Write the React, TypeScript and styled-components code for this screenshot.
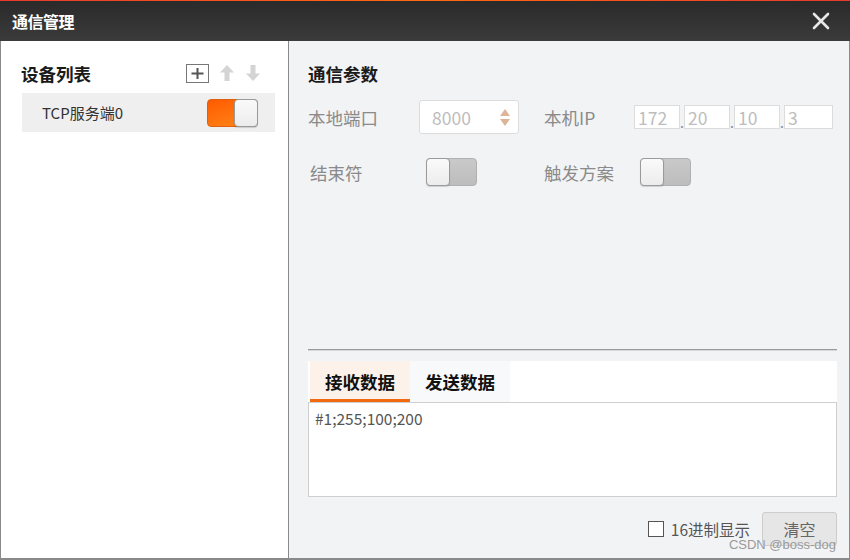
import React from "react";
import styled, { createGlobalStyle } from "styled-components";

const Global = createGlobalStyle`
  html, body { margin: 0; padding: 0; background: #f2f3f5; }
  body { font-family: "Noto Sans CJK SC", "Noto Sans", sans-serif; }
  * { box-sizing: border-box; }
`;

const Window = styled.div`
  position: relative;
  width: 850px;
  height: 560px;
  display: flex;
  flex-direction: column;
  background: #f2f3f5;
`;

const TitleBar = styled.div`
  height: 41px;
  flex: none;
  display: flex;
  align-items: center;
  justify-content: space-between;
  padding: 0 20px 0 12px;
  background: linear-gradient(#2a2a2a, #3b3b3b);
  border-top: 1px solid #f0502a;
  border-image: linear-gradient(90deg, #e8392c, #ff6a10 50%, #e8392c) 1 0 0 0;
`;

const Title = styled.div`
  color: #fff;
  font-size: 16px;
  font-weight: 700;
  letter-spacing: -0.5px;
`;

const Body = styled.div`
  flex: 1;
  display: flex;
  border: 1px solid #8a8a8a;
  border-top: none;
  border-bottom-width: 2px;
  min-height: 0;
`;

const LeftPanel = styled.div`
  width: 288px;
  flex: none;
  background: #fff;
  border-right: 1px solid #8a8a8a;
  padding: 20px 13px 0 20px;
`;

const PanelHeader = styled.div`
  display: flex;
  align-items: center;
  justify-content: space-between;
  height: 24px;
  color: #1a1a1a;
  font-size: 17.5px;
  font-weight: 700;
`;

const Tools = styled.div`
  display: flex;
  align-items: center;
  gap: 10px;
  padding-right: 14px;
`;

const DeviceRow = styled.div`
  margin-top: 8px;
  margin-left: 1px;
  height: 39px;
  display: flex;
  align-items: center;
  justify-content: space-between;
  padding: 0 17px 0 20px;
  background: #efefef;
  font-size: 15px;
  color: #333;
`;

const Track = styled.div<{ $on?: boolean }>`
  position: relative;
  flex: none;
  width: 51px;
  height: 28px;
  border-radius: 4px;
  background: ${(p) =>
    p.$on
      ? "linear-gradient(160deg, #ff5a00, #ff8a1a)"
      : "linear-gradient(#c9c9c9, #bdbdbd)"};
  border: 1px solid ${(p) => (p.$on ? "#e06010" : "#b0b0b0")};
`;

const Knob = styled.div<{ $on?: boolean }>`
  position: absolute;
  top: -1px;
  ${(p) => (p.$on ? "right: -1px;" : "left: -1px;")}
  width: 24px;
  height: 28px;
  border-radius: 4px;
  background: linear-gradient(#fafafa, #ececec);
  border: 1px solid #9a9a9a;
  box-shadow: 0 1px 1px rgba(0, 0, 0, 0.15);
`;

const Toggle = ({ on }: { on?: boolean }) => (
  <Track $on={on}>
    <Knob $on={on} />
  </Track>
);

const RightPanel = styled.div`
  flex: 1;
  display: flex;
  flex-direction: column;
  padding: 20px 12px 0 19px;
`;

const FieldRow = styled.div<{ $top: number }>`
  display: flex;
  align-items: center;
  height: 34px;
  margin-top: ${(p) => p.$top}px;
`;

const Label = styled.div<{ $w: number; $indent?: number }>`
  width: ${(p) => p.$w}px;
  margin-left: ${(p) => p.$indent ?? 0}px;
  font-size: 17.5px;
  color: #8a8a8a;
  flex: none;
  white-space: nowrap;
`;

const SpinBox = styled.div`
  width: 100px;
  height: 34px;
  display: flex;
  align-items: center;
  justify-content: space-between;
  padding: 0 8px 0 12px;
  background: #fff;
  border: 1px solid #dcdcdc;
  border-radius: 3px;
  font-size: 17.5px;
  color: #bdbdbd;
`;

const Arrows = styled.div`
  display: flex;
  flex-direction: column;
  gap: 3px;
`;

const IpGroup = styled.div`
  display: flex;
  align-items: flex-end;
`;

const IpBox = styled.div<{ $w: number }>`
  width: ${(p) => p.$w}px;
  height: 24px;
  display: flex;
  align-items: center;
  padding-left: 3px;
  background: #fff;
  border: 1px solid #dcdcdc;
  font-size: 17.5px;
  color: #bdbdbd;
`;

const IpDot = styled.span`
  width: 4px;
  text-align: center;
  font-size: 14px;
  line-height: 14px;
  color: #8a8a8a;
`;

const Spacer = styled.div`
  flex: 1;
`;

const Separator = styled.div`
  height: 2px;
  background: #9a9a9a;
  border-bottom: 1px solid #d8d8d8;
`;

const TabBar = styled.div`
  margin-top: 10px;
  height: 42px;
  display: flex;
  background: #fff;
  padding-left: 2px;
  border-bottom: 1px solid #cfcfcf;
`;

const Tab = styled.div<{ $active?: boolean }>`
  width: 100px;
  display: flex;
  align-items: center;
  justify-content: center;
  font-size: 17.5px;
  font-weight: 700;
  color: #111;
  background: ${(p) => (p.$active ? "#fdf2ea" : "#f8f9fb")};
  border-bottom: 3px solid ${(p) => (p.$active ? "#f26a0f" : "transparent")};
  padding-top: 2px;
`;

const DataArea = styled.div`
  height: 94px;
  background: #fff;
  border: 1px solid #cfcfcf;
  border-top: none;
  padding: 4px 6px;
  font-size: 15.5px;
  color: #555;
`;

const Footer = styled.div`
  margin-top: 15px;
  display: flex;
  align-items: center;
  justify-content: flex-end;
  gap: 12px;
`;

const Check = styled.label`
  display: flex;
  align-items: center;
  gap: 7px;
  font-size: 15.5px;
  color: #555;
`;

const Box = styled.span`
  width: 16px;
  height: 16px;
  border: 1px solid #555;
  background: #fff;
`;

const Button = styled.button`
  width: 75px;
  height: 34px;
  background: #e6e6e6;
  border: 1px solid #cdcdcd;
  border-radius: 3px;
  font-family: inherit;
  font-size: 16px;
  color: #666;
`;

const Watermark = styled.div`
  position: absolute;
  right: 14px;
  bottom: 8px;
  font-family: "Liberation Sans", Arial, sans-serif;
  font-size: 13px;
  color: #9a9a9a;
  pointer-events: none;
`;

const CloseIcon = () => (
  <svg width="18" height="18" viewBox="0 0 18 18">
    <path d="M2 2 L16 16 M16 2 L2 16" stroke="#e8e8e8" strokeWidth="2.6" strokeLinecap="round" />
  </svg>
);

const PlusBox = () => (
  <svg width="23" height="19" viewBox="0 0 23 19">
    <rect x="0.5" y="0.5" width="22" height="18" fill="#fff" stroke="#777" />
    <path d="M5.5 9.5 H17.5 M11.5 4 V15" stroke="#555" strokeWidth="2" />
  </svg>
);

const ArrowIcon = ({ down }: { down?: boolean }) => (
  <svg width="16" height="18" viewBox="0 0 16 18" style={down ? { transform: "rotate(180deg)" } : undefined}>
    <path d="M8 1 L15 8.5 H10.5 V17 H5.5 V8.5 H1 Z" fill="#d4d4d4" />
  </svg>
);

const Caret = ({ down }: { down?: boolean }) => (
  <svg width="10" height="7" viewBox="0 0 10 7">
    <path d={down ? "M0 0 H10 L5 7 Z" : "M0 7 H10 L5 0 Z"} fill="#ddb49a" />
  </svg>
);

export default function App() {
  return (
    <>
      <Global />
      <Window>
        <TitleBar>
          <Title>通信管理</Title>
          <CloseIcon />
        </TitleBar>
        <Body>
          <LeftPanel>
            <PanelHeader>
              设备列表
              <Tools>
                <PlusBox />
                <ArrowIcon />
                <ArrowIcon down />
              </Tools>
            </PanelHeader>
            <DeviceRow>
              TCP服务端0
              <Toggle on />
            </DeviceRow>
          </LeftPanel>
          <RightPanel>
            <PanelHeader>通信参数</PanelHeader>
            <FieldRow $top={15}>
              <Label $w={111}>本地端口</Label>
              <SpinBox>
                8000
                <Arrows>
                  <Caret />
                  <Caret down />
                </Arrows>
              </SpinBox>
              <Label $w={90} $indent={25}>本机IP</Label>
              <IpGroup>
                <IpBox $w={46}>172</IpBox>
                <IpDot>.</IpDot>
                <IpBox $w={46}>20</IpBox>
                <IpDot>.</IpDot>
                <IpBox $w={46}>10</IpBox>
                <IpDot>.</IpDot>
                <IpBox $w={49}>3</IpBox>
              </IpGroup>
            </FieldRow>
            <FieldRow $top={21}>
              <Label $w={116} $indent={2}>结束符</Label>
              <Toggle />
              <Label $w={96} $indent={67}>触发方案</Label>
              <Toggle />
            </FieldRow>
            <Spacer />
            <Separator />
            <TabBar>
              <Tab $active>接收数据</Tab>
              <Tab>发送数据</Tab>
            </TabBar>
            <DataArea>#1;255;100;200</DataArea>
            <Footer>
              <Check>
                <Box />
                16进制显示
              </Check>
              <Button>清空</Button>
            </Footer>
            <div style={{ height: 12 }} />
          </RightPanel>
        </Body>
        <Watermark>CSDN @boss-dog</Watermark>
      </Window>
    </>
  );
}
